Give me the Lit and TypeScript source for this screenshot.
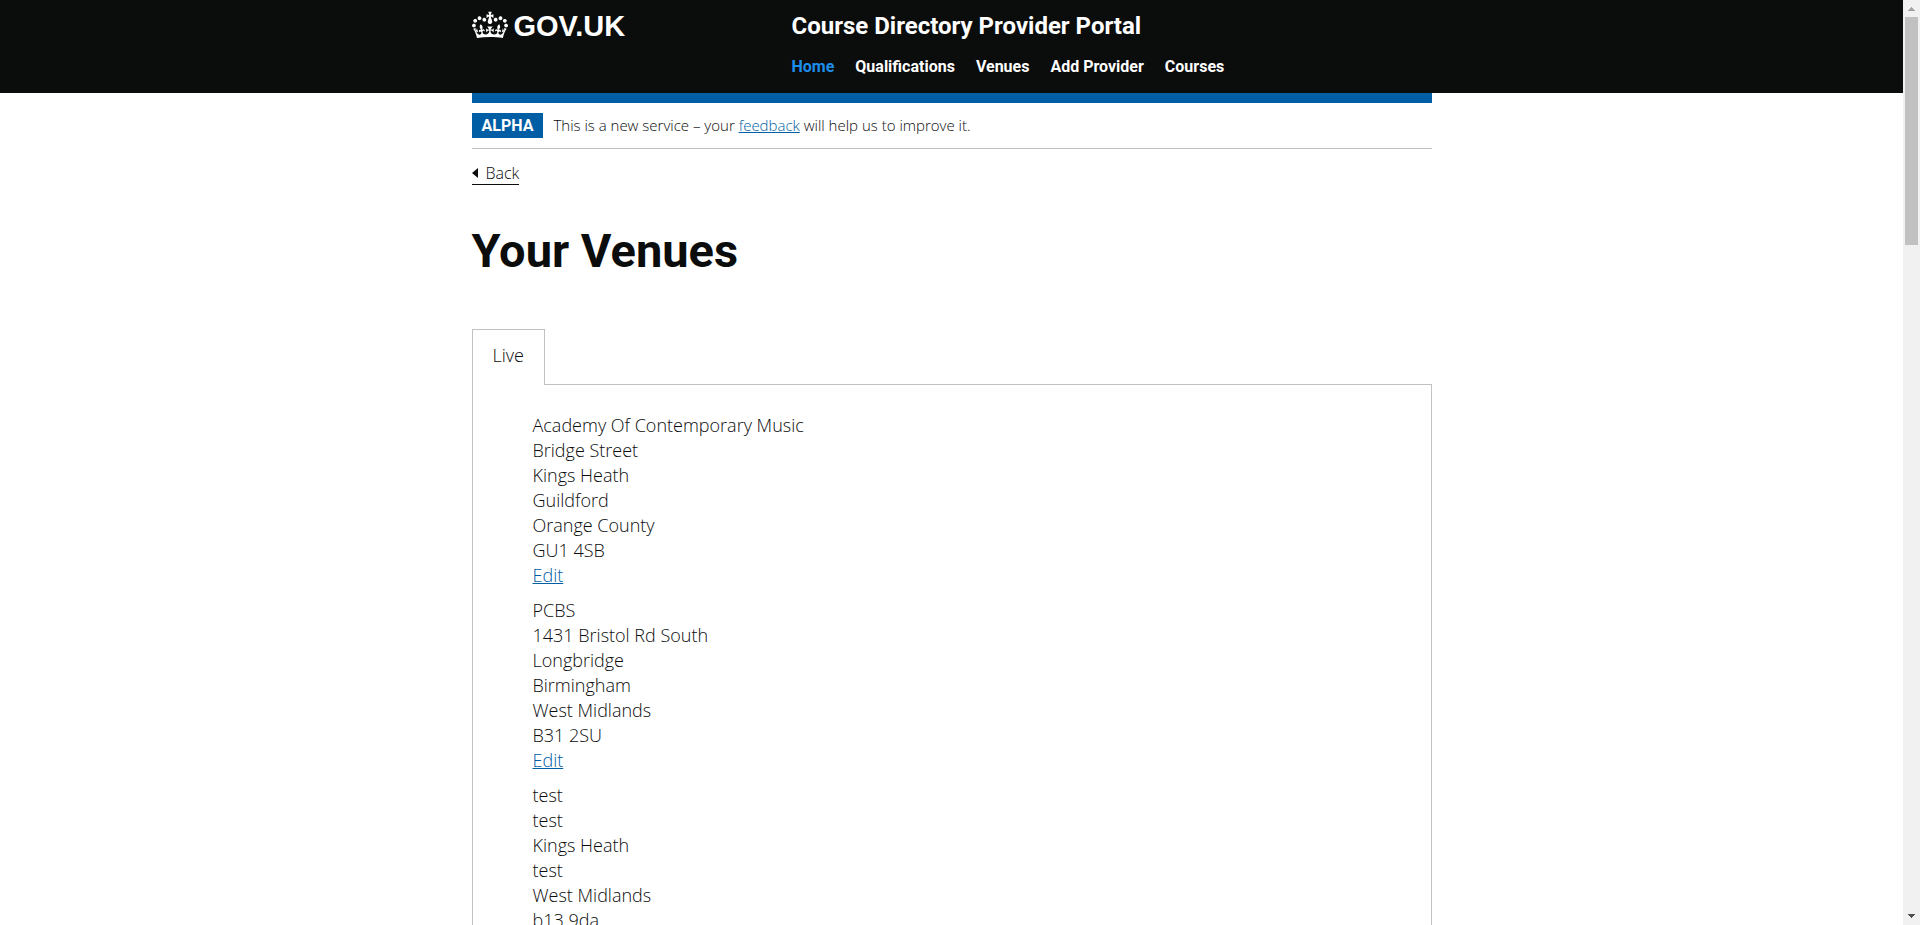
import { LitElement, html, css } from "lit";
import { customElement } from "lit/decorators.js";

const NAV = ["Home", "Qualifications", "Venues", "Add Provider", "Courses"];

const VENUES: string[][] = [
  ["Academy Of Contemporary Music", "Bridge Street", "Kings Heath", "Guildford", "Orange County", "GU1 4SB"],
  ["PCBS", "1431 Bristol Rd South", "Longbridge", "Birmingham", "West Midlands", "B31 2SU"],
  ["test", "test", "Kings Heath", "test", "West Midlands", "b13 9da"],
];

@customElement("portal-header")
class PortalHeader extends LitElement {
  static styles = css`
    :host { display: block; background: #0b0c0c; color: #fff; font-family: Roboto, sans-serif; font-weight: 700; }
    .inner { max-width: 960px; margin: 0 auto; padding: 10px 0 15px; display: grid; grid-template-columns: 1fr 2fr; }
    a { color: inherit; text-decoration: none; }
    .logo { display: flex; gap: 6px; height: 30px; font: 700 29px/32px "Liberation Sans", sans-serif; }
    .crown { width: 36px; height: 30px; fill: #fff; }
    .title { display: block; font-size: 24px; line-height: 32px; }
    ul { display: flex; flex-wrap: wrap; gap: 21px; list-style: none; margin: 14px 0 0; padding: 0; font-size: 16px; line-height: 22px; }
    .active { color: #1d8feb; }
  `;
  render() {
    return html`<header class="inner">
      <a class="logo" href="#">
        <svg class="crown" viewBox="0 0 132 97" aria-hidden="true">
          <path fill-rule="evenodd" d="M25 30.2c3.5 1.5 7.7-.2 9.1-3.7 1.5-3.6-.2-7.8-3.9-9.2-3.6-1.4-7.6.3-9.1 3.9-1.4 3.5.3 7.5 3.9 9zM9 39.5c3.6 1.5 7.8-.2 9.2-3.7 1.5-3.6-.2-7.8-3.9-9.1-3.6-1.5-7.6.2-9.1 3.8-1.4 3.5.3 7.5 3.8 9zM4.4 57.2c3.5 1.5 7.7-.2 9.1-3.8 1.5-3.6-.2-7.7-3.9-9.1-3.5-1.5-7.6.3-9.1 3.8-1.4 3.5.3 7.6 3.9 9.1zm38.3-21.4c3.5 1.5 7.7-.2 9.1-3.8 1.5-3.6-.2-7.7-3.9-9.1-3.6-1.5-7.6.3-9.1 3.8-1.3 3.6.4 7.7 3.9 9.1zm64.4-5.6c-3.6 1.5-7.8-.2-9.1-3.7-1.5-3.6.2-7.8 3.8-9.2 3.6-1.4 7.7.3 9.2 3.9 1.3 3.5-.4 7.5-3.9 9zm15.9 9.3c-3.6 1.5-7.7-.2-9.1-3.7-1.5-3.6.2-7.8 3.7-9.1 3.6-1.5 7.7.2 9.2 3.8 1.5 3.5-.3 7.5-3.8 9zm4.7 17.7c-3.6 1.5-7.8-.2-9.2-3.8-1.5-3.6.2-7.7 3.9-9.1 3.6-1.5 7.7.3 9.2 3.8 1.3 3.5-.4 7.6-3.9 9.1zM89.3 35.8c-3.6 1.5-7.8-.2-9.2-3.8-1.4-3.6.2-7.7 3.9-9.1 3.6-1.5 7.7.3 9.2 3.8 1.4 3.6-.3 7.7-3.9 9.1zM69.7 17.7l8.9 4.7V9.3l-8.9 2.8c-.2-.3-.5-.6-.9-.9L72.4 0H59.6l3.5 11.2c-.3.3-.6.5-.9.9l-8.8-2.8v13.1l8.8-4.7c.3.3.6.7.9.9l-5 15.4v.1c-.2.8-.4 1.6-.4 2.4 0 4.1 3.1 7.5 7 8.1h.2c.3 0 .7.1 1 .1.4 0 .7 0 1-.1h.2c4-.6 7.1-4.1 7.1-8.1 0-.8-.1-1.7-.4-2.4V34l-5.1-15.4c.4-.2.7-.6 1-.9zM66 92.8c16.9 0 32.8 1.1 47.1 3.2 4-16.9 8.9-26.7 14-33.5l-9.6-3.4c1 4.9 1.1 7.2 0 10.2-1.5-1.4-3-4.3-4.2-8.7L108.6 76c2.8-2 5-3.2 7.5-3.3-4.4 9.4-10 11.9-13.6 11.2-4.3-.8-6.3-4.6-5.6-7.9 1-4.7 5.7-5.9 8-.5 4.3-8.7-3-11.4-7.6-8.8 7.1-7.2 7.9-13.5 2.1-21.1-8 6.1-8.1 12.3-4.5 20.8-4.7-5.4-12.1-2.5-9.5 6.2 3.4-5.2 7.9-2 7.2 3.1-.6 4.3-6.4 7.8-13.5 7.2-10.3-.9-10.9-8-11.2-13.8 2.5-.5 7.1 1.8 11 7.3L80.2 60c-4.1 4.4-8 5.3-12.3 5.4 1.4-4.4 8-11.6 8-11.6H55.5s6.4 7.2 7.9 11.6c-4.2-.1-8-1-12.3-5.4l1.4 16.4c3.9-5.5 8.5-7.7 10.9-7.3-.3 5.8-.9 12.8-11.1 13.8-7.2.6-12.9-2.9-13.5-7.2-.7-5 3.8-8.3 7.1-3.1 2.7-8.7-4.6-11.6-9.4-6.2 3.7-8.5 3.6-14.7-4.6-20.8-5.8 7.6-5 13.9 2.2 21.1-4.7-2.6-11.9.1-7.7 8.8 2.3-5.5 7.1-4.2 8.1.5.7 3.3-1.3 7.1-5.7 7.9-3.5.7-9-1.8-13.5-11.2 2.5.1 4.7 1.3 7.5 3.3l-4.7-15.4c-1.2 4.4-2.7 7.2-4.3 8.7-1.1-3-.9-5.3 0-10.2l-9.5 3.4c5 6.9 9.9 16.7 14 33.5 14.8-2.1 30.8-3.2 47.7-3.2z"/>
        </svg>
        <span>GOV.UK</span>
      </a>
      <div>
        <a class="title" href="#">Course Directory Provider Portal</a>
        <nav aria-label="Top level navigation">
          <ul>${NAV.map((n, i) => html`<li><a class=${i === 0 ? "active" : ""} href="#">${n}</a></li>`)}</ul>
        </nav>
      </div>
    </header>`;
  }
}

@customElement("page-scrollbar")
class PageScrollbar extends LitElement {
  static styles = css`
    :host { display: flex; flex-direction: column; background: #f1f1f1; }
    svg { display: block; width: 17px; height: 17px; }
    .track { flex: 1; padding: 0 2px; }
    .thumb { height: 25.6%; background: #c1c1c1; }
    .up { fill: #a3a3a3; }
    .down { fill: #505050; }
  `;
  render() {
    return html`
      <svg class="up" viewBox="0 0 17 17" shape-rendering="crispEdges"><path d="M8 7h1v1h1v1h1v1h1v1H5v-1h1V9h1V8h1z"/></svg>
      <div class="track"><div class="thumb"></div></div>
      <svg class="down" viewBox="0 0 17 17" shape-rendering="crispEdges"><path d="M5 6h7v1h-1v1h-1v1H9v1H8V9H7V8H6V7H5z"/></svg>`;
  }
}

@customElement("app-root")
class AppRoot extends LitElement {
  static styles = css`
    :host {
      display: grid; grid-template-columns: minmax(0, 1fr) 17px; height: 100vh;
      background: #fff; color: #0b0c0c; font: 300 18px/25px "Open Sans", sans-serif;
    }
    .page { overflow-y: auto; scrollbar-width: none; }
    .wrap { max-width: 960px; margin: 0 auto; }
    a { color: #005ea5; }
    .phase { display: flex; gap: 10px; border-top: 10px solid #005ea5; border-bottom: 1px solid #bfc1c3; padding: 10px 0; font-size: 15px; }
    .phase p { margin: 0; }
    .tag { background: #005ea5; color: #fff; font: 700 16px/25px Roboto, sans-serif; padding: 0 10px; }
    .back {
      display: inline-flex; align-items: center; gap: 8px; margin-top: 13px;
      border-bottom: 1px solid #0b0c0c; color: inherit; font-size: 16px; line-height: 22px; text-decoration: none;
    }
    .arrow { border: 5px solid transparent; border-left-width: 0; border-right: 6px solid #0b0c0c; }
    h1 { margin: 38px 0 50px; font: 700 47px/56px Roboto, sans-serif; }
    .tabs { display: flex; }
    .tab {
      border: 1px solid #bfc1c3; border-bottom: 0; background: #fff; color: inherit;
      padding: 13px 20px 17px; margin: 0 0 -1px; font: inherit; position: relative;
    }
    .panel { border: 1px solid #bfc1c3; padding: 28px 20px; }
    .venues { list-style: none; margin: 0; padding: 0 0 0 40px; display: grid; gap: 10px; }
    address { font-style: normal; }
  `;
  render() {
    return html`
      <div class="page">
        <portal-header></portal-header>
        <div class="wrap">
          <div class="phase">
            <strong class="tag">ALPHA</strong>
            <p>This is a new service – your <a href="#">feedback</a> will help us to improve it.</p>
          </div>
          <a class="back" href="#"><span class="arrow"></span>Back</a>
          <main>
            <h1>Your Venues</h1>
            <div class="tabs" role="tablist">
              <button class="tab" id="tab-live" role="tab" aria-selected="true" aria-controls="live">Live</button>
            </div>
            <section class="panel" id="live" role="tabpanel" aria-labelledby="tab-live">
              <ul class="venues">
                ${VENUES.map((lines) => html`<li>
                  <address>${lines.map((l) => html`<div>${l}</div>`)}</address>
                  <a href="#">Edit</a>
                </li>`)}
              </ul>
            </section>
          </main>
        </div>
      </div>
      <page-scrollbar></page-scrollbar>`;
  }
}
